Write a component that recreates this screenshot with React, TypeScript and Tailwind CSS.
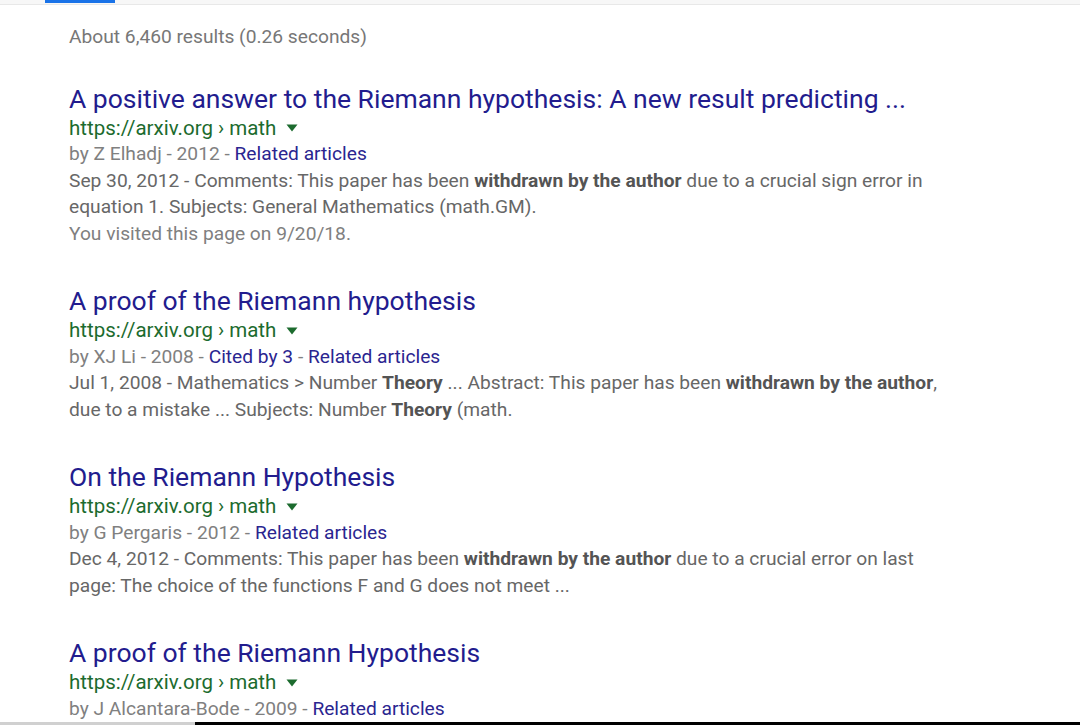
import type { ReactNode } from "react";

type Result = {
  title: string;
  byline: string;
  links: string[];
  snippet?: ReactNode;
  visited?: string;
};

const RESULTS: Result[] = [
  {
    title: "A positive answer to the Riemann hypothesis: A new result predicting ...",
    byline: "by Z Elhadj - 2012",
    links: ["Related articles"],
    snippet: (
      <>
        Sep 30, 2012 - Comments: This paper has been <b className="font-bold text-[#545454]">withdrawn by the author</b> due to a crucial sign error in
        <br />
        equation 1. Subjects: General Mathematics (math.GM).
      </>
    ),
    visited: "You visited this page on 9/20/18.",
  },
  {
    title: "A proof of the Riemann hypothesis",
    byline: "by XJ Li - 2008",
    links: ["Cited by 3", "Related articles"],
    snippet: (
      <>
        Jul 1, 2008 - Mathematics &gt; Number <b className="font-bold text-[#545454]">Theory</b> ... Abstract: This paper has been <b className="font-bold text-[#545454]">withdrawn by the author</b>,
        <br />
        due to a mistake ... Subjects: Number <b className="font-bold text-[#545454]">Theory</b> (math.
      </>
    ),
  },
  {
    title: "On the Riemann Hypothesis",
    byline: "by G Pergaris - 2012",
    links: ["Related articles"],
    snippet: (
      <>
        Dec 4, 2012 - Comments: This paper has been <b className="font-bold text-[#545454]">withdrawn by the author</b> due to a crucial error on last
        <br />
        page: The choice of the functions F and G does not meet ...
      </>
    ),
  },
  {
    title: "A proof of the Riemann Hypothesis",
    byline: "by J Alcantara-Bode - 2009",
    links: ["Related articles"],
  },
];

function ResultItem({ r }: { r: Result }) {
  return (
    <div className="flex flex-col">
      <a className="text-[26.5px] leading-[32px] text-[#221c8e] whitespace-nowrap">{r.title}</a>
      <div className="flex items-center text-[20.5px] leading-[26.5px] text-[#1c6b2e]">
        <span>https://arxiv.org › math</span>
        <svg width="12" height="8" viewBox="0 0 12 8" className="ml-[10px] mt-[1px]">
          <path d="M0.5 0.5 L11.5 0.5 L6 7.5 Z" fill="#1c6b2e" />
        </svg>
      </div>
      <div className="text-[19.2px] leading-[26.5px] text-[#808080]">
        {r.byline}
        {r.links.map((l) => (
          <span key={l}>
            {" - "}
            <a className="text-[#2a2590]">{l}</a>
          </span>
        ))}
      </div>
      {r.snippet && (
        <p className="text-[19.2px] leading-[26.5px] text-[#676767] whitespace-nowrap">{r.snippet}</p>
      )}
      {r.visited && (
        <p className="text-[19.2px] leading-[26.5px] text-[#808080]">{r.visited}</p>
      )}
    </div>
  );
}

export default function App() {
  return (
    <div
      className="relative w-[1080px] h-[725px] overflow-hidden bg-white"
      style={{ fontFamily: "Roboto, 'Noto Sans', sans-serif" }}
    >
      {/* tab strip */}
      <div className="relative h-[5px] border-b border-[#e8e8e8] bg-[#f7f7f7]">
        <div className="absolute left-[45px] top-0 h-[3px] w-[70px] bg-[#1a73e8]" />
      </div>

      <div className="pl-[69px] pt-[19px]">
        <div className="text-[19.2px] leading-[26.5px] text-[#777777]">
          About 6,460 results (0.26 seconds)
        </div>
        <div className="mt-[32px] flex flex-col gap-[38px]">
          {RESULTS.map((r) => (
            <ResultItem key={r.title} r={r} />
          ))}
        </div>
      </div>

      {/* screen edge below the page */}
      <div className="absolute bottom-0 left-0 right-0 flex h-[3px]">
        <div className="w-[195px] bg-[#d0d0d0]" />
        <div className="flex-1 bg-black" />
      </div>
    </div>
  );
}
